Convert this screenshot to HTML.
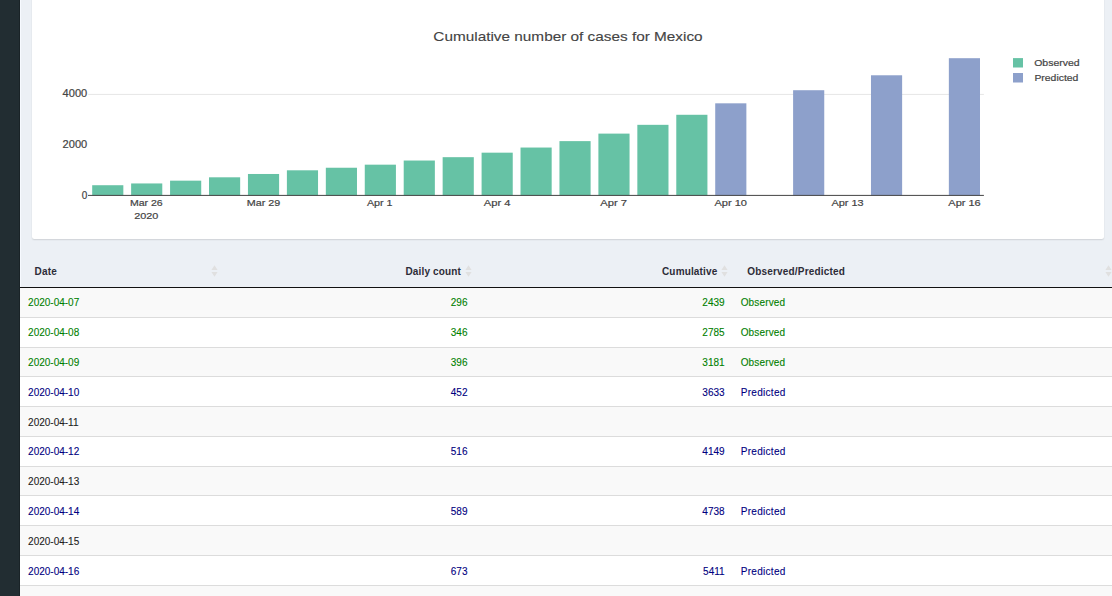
<!DOCTYPE html>
<html><head><meta charset="utf-8">
<style>
html,body{margin:0;padding:0}
body{width:1112px;height:596px;overflow:hidden;background:#ecf0f5;position:relative;font-family:"Liberation Sans",sans-serif}
#side{position:absolute;left:0;top:0;width:20px;height:596px;background:#222d32}
#side:after{content:"";position:absolute;right:0;top:0;width:1px;height:100%;background:#1a2327}
#sidehl{position:absolute;left:20px;top:0;width:1px;height:596px;background:#f7faff}
#card{position:absolute;left:32px;top:-10px;width:1072px;height:248.6px;background:#fff;border-radius:2.5px;box-shadow:0 0.5px 1.5px rgba(0,0,0,0.13)}
#chart{position:absolute;left:0;top:0}
#thead{position:absolute;left:21px;top:240px;width:1091px;height:47px}
.th{position:absolute;top:262px;font-weight:bold;font-size:10px;color:#2c2c38;white-space:nowrap;line-height:16px}
.sort{position:absolute;top:265px;width:7px;height:12px}
#hb{position:absolute;left:20px;top:286.6px;width:1092px;height:1.6px;background:#111}
.row{position:absolute;left:20px;width:1092px;height:29.77px;border-bottom:1px solid #dcdcdc;box-sizing:border-box}
.td{position:absolute;top:8.4px;-webkit-text-stroke:0.1px currentColor;font-size:10px;white-space:nowrap;line-height:14px}
</style></head>
<body>
<div id="side"></div><div id="sidehl"></div>
<div id="card"></div>
<svg id="chart" width="1112" height="240" viewBox="0 0 1112 240" font-family="Liberation Sans, sans-serif">
<line x1="88.2" y1="94.4" x2="983.9" y2="94.4" stroke="#e6e6e6" stroke-width="1"/>
<g id="bars">
<rect x="92.19" y="185.22" width="31.15" height="10.28" fill="#66c2a5"/>
<rect x="131.13" y="183.45" width="31.15" height="12.05" fill="#66c2a5"/>
<rect x="170.07" y="180.66" width="31.15" height="14.84" fill="#66c2a5"/>
<rect x="209.01" y="177.31" width="31.15" height="18.19" fill="#66c2a5"/>
<rect x="247.95" y="173.98" width="31.15" height="21.52" fill="#66c2a5"/>
<rect x="286.89" y="170.30" width="31.15" height="25.20" fill="#66c2a5"/>
<rect x="325.83" y="167.74" width="31.15" height="27.76" fill="#66c2a5"/>
<rect x="364.77" y="164.67" width="31.15" height="30.83" fill="#66c2a5"/>
<rect x="403.71" y="160.53" width="31.15" height="34.97" fill="#66c2a5"/>
<rect x="442.65" y="157.18" width="31.15" height="38.32" fill="#66c2a5"/>
<rect x="481.59" y="152.67" width="31.15" height="42.83" fill="#66c2a5"/>
<rect x="520.52" y="147.54" width="31.15" height="47.96" fill="#66c2a5"/>
<rect x="559.46" y="141.12" width="31.15" height="54.38" fill="#66c2a5"/>
<rect x="598.40" y="133.61" width="31.15" height="61.89" fill="#66c2a5"/>
<rect x="637.34" y="124.83" width="31.15" height="70.67" fill="#66c2a5"/>
<rect x="676.28" y="114.78" width="31.15" height="80.72" fill="#66c2a5"/>
<rect x="715.22" y="103.32" width="31.15" height="92.18" fill="#8da0cb"/>
<rect x="793.10" y="90.22" width="31.15" height="105.28" fill="#8da0cb"/>
<rect x="870.98" y="75.28" width="31.15" height="120.22" fill="#8da0cb"/>
<rect x="948.85" y="58.20" width="31.15" height="137.30" fill="#8da0cb"/>
</g>
<line x1="88" y1="195.4" x2="983.9" y2="195.4" stroke="#444" stroke-width="1"/>
<g font-size="10" fill="#444" stroke="#444" stroke-width="0.2" text-anchor="end" lengthAdjust="spacingAndGlyphs">
<text x="87.2" y="97.2" textLength="24.6" lengthAdjust="spacingAndGlyphs">4000</text>
<text x="87.2" y="148.1" textLength="24.6" lengthAdjust="spacingAndGlyphs">2000</text>
<text x="87.2" y="199.2">0</text>
</g>
<g font-size="9.5" fill="#444" stroke="#444" stroke-width="0.2" text-anchor="middle">
<text x="146.3" y="205.8" textLength="32.8" lengthAdjust="spacingAndGlyphs">Mar 26</text>
<text x="146.3" y="218.9" textLength="24.2" lengthAdjust="spacingAndGlyphs">2020</text>
<text x="263.45" y="205.8" textLength="33.5" lengthAdjust="spacingAndGlyphs">Mar 29</text>
<text x="379.75" y="205.8" textLength="25.6" lengthAdjust="spacingAndGlyphs">Apr 1</text>
<text x="497.1" y="205.8" textLength="26.7" lengthAdjust="spacingAndGlyphs">Apr 4</text>
<text x="613.7" y="205.8" textLength="26.7" lengthAdjust="spacingAndGlyphs">Apr 7</text>
<text x="730.7" y="205.8" textLength="32.5" lengthAdjust="spacingAndGlyphs">Apr 10</text>
<text x="847.5" y="205.8" textLength="32.2" lengthAdjust="spacingAndGlyphs">Apr 13</text>
<text x="964.5" y="205.8" textLength="32.4" lengthAdjust="spacingAndGlyphs">Apr 16</text>
</g>
<text x="568" y="40.8" font-size="13" fill="#444" stroke="#444" stroke-width="0.12" text-anchor="middle" textLength="269.3" lengthAdjust="spacingAndGlyphs">Cumulative number of cases for Mexico</text>
<rect x="1013" y="58.1" width="10" height="9.4" fill="#66c2a5"/>
<rect x="1013" y="73" width="10" height="9.5" fill="#8da0cb"/>
<g font-size="9.5" fill="#444" stroke="#444" stroke-width="0.2">
<text x="1034.2" y="65.8" textLength="45.4" lengthAdjust="spacingAndGlyphs">Observed</text>
<text x="1034.4" y="81.2" textLength="44" lengthAdjust="spacingAndGlyphs">Predicted</text>
</g>
</svg>

<span class="th" style="left:34.6px;top:264.4px;letter-spacing:0.2px">Date</span>
<svg class="sort" style="left:211.1px" width="7" height="12" viewBox="0 0 7 12"><path d="M3.5 0.3 L6.6 5 L0.4 5 Z M3.5 11.7 L6.6 7 L0.4 7 Z" fill="#e0e0e0"/></svg>
<span class="th" style="right:651.0px;top:264.4px;letter-spacing:0.15px">Daily count</span>
<svg class="sort" style="left:464.5px" width="7" height="12" viewBox="0 0 7 12"><path d="M3.5 0.3 L6.6 5 L0.4 5 Z M3.5 11.7 L6.6 7 L0.4 7 Z" fill="#e0e0e0"/></svg>
<span class="th" style="right:394.6px;top:264.4px;letter-spacing:0.15px">Cumulative</span>
<svg class="sort" style="left:721.1px" width="7" height="12" viewBox="0 0 7 12"><path d="M3.5 0.3 L6.6 5 L0.4 5 Z M3.5 11.7 L6.6 7 L0.4 7 Z" fill="#e0e0e0"/></svg>
<span class="th" style="left:747.3px;top:264.4px;letter-spacing:0.18px">Observed/Predicted</span>
<svg class="sort" style="left:1104.8px" width="7" height="12" viewBox="0 0 7 12"><path d="M3.5 0.3 L6.6 5 L0.4 5 Z M3.5 11.7 L6.6 7 L0.4 7 Z" fill="#e0e0e0"/></svg>
<div id="hb"></div>
<div class="row" style="top:288.10px;background:#f9f9f9;color:#008000">
<span class="td" style="left:8.1px">2020-04-07</span>
<span class="td r" style="right:644.5px">296</span>
<span class="td r" style="right:387.4px">2439</span>
<span class="td" style="left:720.7px;letter-spacing:0.15px">Observed</span>
</div>
<div class="row" style="top:317.87px;background:#fff;color:#008000">
<span class="td" style="left:8.1px">2020-04-08</span>
<span class="td r" style="right:644.5px">346</span>
<span class="td r" style="right:387.4px">2785</span>
<span class="td" style="left:720.7px;letter-spacing:0.15px">Observed</span>
</div>
<div class="row" style="top:347.64px;background:#f9f9f9;color:#008000">
<span class="td" style="left:8.1px">2020-04-09</span>
<span class="td r" style="right:644.5px">396</span>
<span class="td r" style="right:387.4px">3181</span>
<span class="td" style="left:720.7px;letter-spacing:0.15px">Observed</span>
</div>
<div class="row" style="top:377.41px;background:#fff;color:#000080">
<span class="td" style="left:8.1px">2020-04-10</span>
<span class="td r" style="right:644.5px">452</span>
<span class="td r" style="right:387.4px">3633</span>
<span class="td" style="left:720.7px;letter-spacing:0.3px">Predicted</span>
</div>
<div class="row" style="top:407.18px;background:#f9f9f9;color:#222">
<span class="td" style="left:8.1px">2020-04-11</span>
</div>
<div class="row" style="top:436.95px;background:#fff;color:#000080">
<span class="td" style="left:8.1px">2020-04-12</span>
<span class="td r" style="right:644.5px">516</span>
<span class="td r" style="right:387.4px">4149</span>
<span class="td" style="left:720.7px;letter-spacing:0.3px">Predicted</span>
</div>
<div class="row" style="top:466.72px;background:#f9f9f9;color:#222">
<span class="td" style="left:8.1px">2020-04-13</span>
</div>
<div class="row" style="top:496.49px;background:#fff;color:#000080">
<span class="td" style="left:8.1px">2020-04-14</span>
<span class="td r" style="right:644.5px">589</span>
<span class="td r" style="right:387.4px">4738</span>
<span class="td" style="left:720.7px;letter-spacing:0.3px">Predicted</span>
</div>
<div class="row" style="top:526.26px;background:#f9f9f9;color:#222">
<span class="td" style="left:8.1px">2020-04-15</span>
</div>
<div class="row" style="top:556.03px;background:#fff;color:#000080">
<span class="td" style="top:9.4px;left:8.1px">2020-04-16</span>
<span class="td r" style="top:9.4px;right:644.5px">673</span>
<span class="td r" style="top:9.4px;right:387.4px">5411</span>
<span class="td" style="top:9.4px;left:720.7px;letter-spacing:0.3px">Predicted</span>
</div>
<div class="row" style="top:585.80px;background:#f9f9f9;color:#222">
</div>
</body></html>
